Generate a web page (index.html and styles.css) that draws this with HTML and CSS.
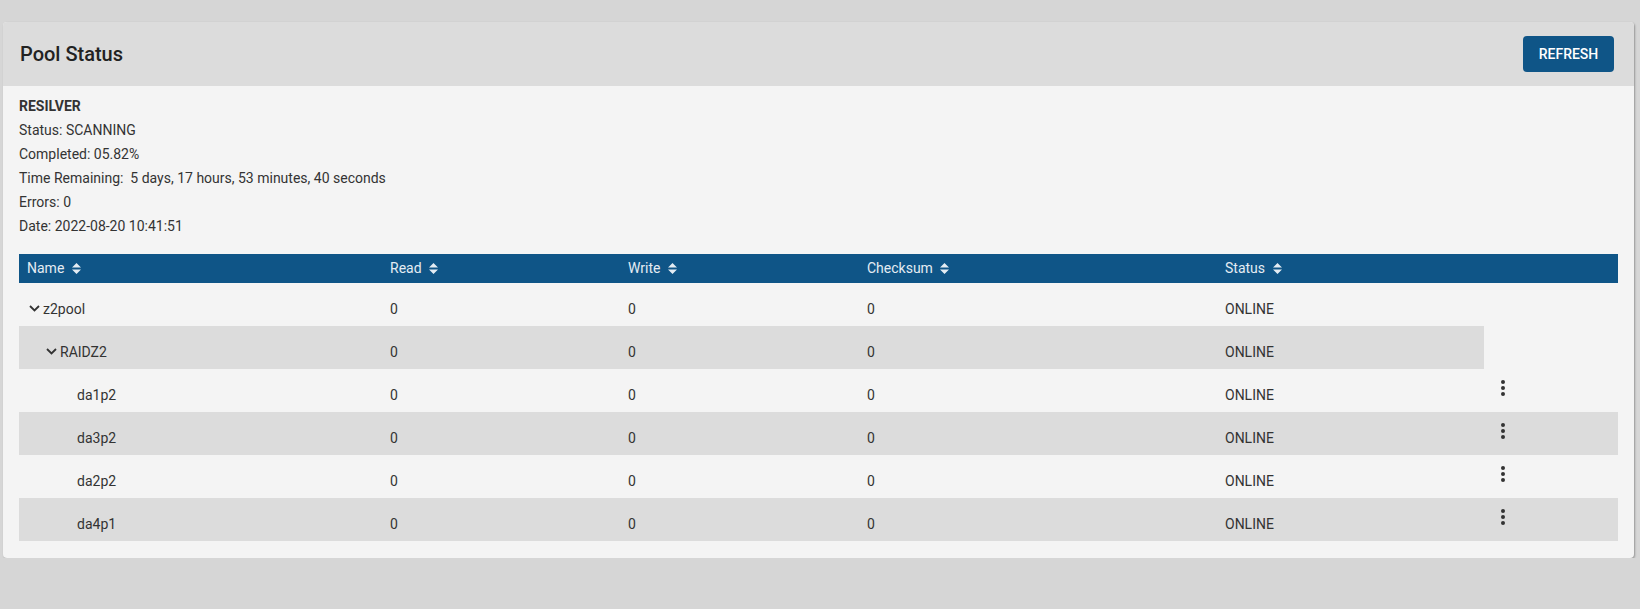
FILE: index.html
```html
<!DOCTYPE html>
<html lang="en">
<head>
    <meta charset="UTF-8">
    <title>Pool Status</title>
    <link rel="stylesheet" href="styles.css">
</head>
<body>
    <div class="card">
        <div class="card-header">
            <h1>Pool Status</h1>
            <button class="button">REFRESH</button>
        </div>
        <div class="card-body">
            <div class="scan-info">
                <div class="scan-title">RESILVER</div>
                <div>Status: SCANNING</div>
                <div>Completed: 05.82%</div>
                <div>Time Remaining:&nbsp; 5 days, 17 hours, 53 minutes, 40 seconds</div>
                <div>Errors: 0</div>
                <div>Date: 2022-08-20 10:41:51</div>
            </div>
            <table class="pool-table">
                <colgroup>
                    <col style="width: 363px">
                    <col style="width: 238px">
                    <col style="width: 239px">
                    <col style="width: 358px">
                    <col style="width: 267px">
                    <col>
                </colgroup>
                <thead>
                    <tr>
                        <th>Name <span class="sort"></span></th>
                        <th>Read <span class="sort"></span></th>
                        <th>Write <span class="sort"></span></th>
                        <th>Checksum <span class="sort"></span></th>
                        <th>Status <span class="sort"></span></th>
                        <th></th>
                    </tr>
                </thead>
                <tbody>
                    <tr>
                        <td><div class="name depth-0"><span class="chevron"></span>z2pool</div></td>
                        <td>0</td><td>0</td><td>0</td><td>ONLINE</td>
                    </tr>
                    <tr>
                        <td><div class="name depth-1"><span class="chevron"></span>RAIDZ2</div></td>
                        <td>0</td><td>0</td><td>0</td><td>ONLINE</td>
                    </tr>
                    <tr>
                        <td><div class="name depth-2"><span class="leaf"></span>da1p2</div></td>
                        <td>0</td><td>0</td><td>0</td><td>ONLINE</td>
                        <td class="actions"><span class="more"></span></td>
                    </tr>
                    <tr>
                        <td><div class="name depth-2"><span class="leaf"></span>da3p2</div></td>
                        <td>0</td><td>0</td><td>0</td><td>ONLINE</td>
                        <td class="actions"><span class="more"></span></td>
                    </tr>
                    <tr>
                        <td><div class="name depth-2"><span class="leaf"></span>da2p2</div></td>
                        <td>0</td><td>0</td><td>0</td><td>ONLINE</td>
                        <td class="actions"><span class="more"></span></td>
                    </tr>
                    <tr>
                        <td><div class="name depth-2"><span class="leaf"></span>da4p1</div></td>
                        <td>0</td><td>0</td><td>0</td><td>ONLINE</td>
                        <td class="actions"><span class="more"></span></td>
                    </tr>
                </tbody>
            </table>
        </div>
    </div>
    <script>
        // same icons everywhere, so fill them in once
        const sortIcon = '<svg width="9" height="11" viewBox="0 0 9 11"><path d="M4.5 0 L9 4.5 H0 Z M0 6.5 H9 L4.5 11 Z" fill="currentColor"/></svg>';
        const chevronIcon = '<svg width="11" height="7" viewBox="0 0 11 7"><path d="M1 1 L5.5 5.5 L10 1" fill="none" stroke="currentColor" stroke-width="1.8"/></svg>';
        const moreIcon = '<svg width="24" height="24" viewBox="0 0 24 24"><circle cx="12" cy="6" r="2"/><circle cx="12" cy="12" r="2"/><circle cx="12" cy="18" r="2"/></svg>';

        document.querySelectorAll('.sort').forEach(el => el.innerHTML = sortIcon);
        document.querySelectorAll('.chevron').forEach(el => el.innerHTML = chevronIcon);
        document.querySelectorAll('.more').forEach(el => el.innerHTML = moreIcon);
    </script>
</body>
</html>
```

FILE: styles.css
```css
body {
    font-family: Roboto, "Liberation Sans", sans-serif;
    margin: 0;
    padding: 22px 6px 0 3px;
    background-color: #d6d6d6;
    color: #333;
}
.card {
    background: #f4f4f4;
    border-radius: 4px;
    box-shadow: 1px 1px 2px rgba(0,0,0,0.3);
    overflow: hidden;
}
.card-header {
    background: #dcdcdc;
    height: 64px;
    display: flex;
    align-items: center;
    justify-content: space-between;
    padding: 0 20px 0 17px;
}
.card-header h1 {
    margin: 0;
    font-size: 20px;
    font-weight: 500;
    color: #222;
}
.button {
    background-color: #0f5587;
    color: #fff;
    border: none;
    border-radius: 4px;
    height: 36px;
    width: 91px;
    font-family: inherit;
    font-size: 14px;
    font-weight: 500;
    cursor: pointer;
}
.card-body {
    padding: 8px 16px 17px 16px;
}
.scan-info {
    font-size: 14px;
    line-height: 24px;
    margin-bottom: 16px;
}
.scan-title {
    font-weight: bold;
}
.pool-table {
    width: 100%;
    border-collapse: collapse;
    table-layout: fixed;
    font-size: 14px;
}
.pool-table th {
    background: #0f5587;
    color: #e4ecf3;
    font-weight: normal;
    text-align: left;
    height: 29px;
    padding: 0 8px;
}
.pool-table th .sort {
    display: inline-block;
    margin-left: 4px;
    vertical-align: -1px;
}
.pool-table td {
    height: 43px;
    padding: 8px 8px 0 8px;
    box-sizing: border-box;
}
.pool-table tbody tr:nth-child(even) {
    background: #dcdcdc;
}
.name {
    display: flex;
    align-items: center;
}
.depth-1 {
    padding-left: 17px;
}
.depth-2 {
    padding-left: 34px;
}
.chevron, .leaf {
    display: inline-flex;
    width: 16px;
    padding-left: 2px;
    box-sizing: border-box;
}
.chevron svg {
    color: #333;
}
.actions {
    text-align: left;
}
.more {
    display: inline-flex;
    margin-left: -1px;
    margin-top: -13px;
    fill: #333;
}
```
